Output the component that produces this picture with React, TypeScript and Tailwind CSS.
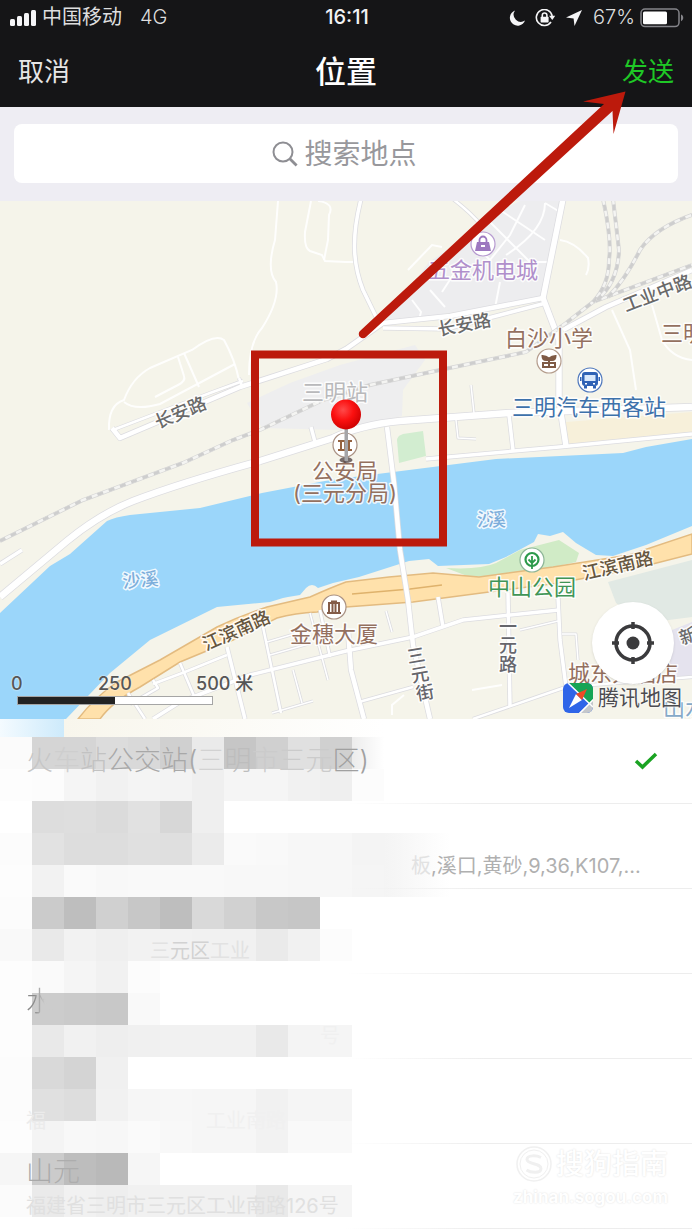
import type { ReactNode } from "react";

const cjk = "font-[Inter,'Noto_Sans_CJK_SC',sans-serif]";

function StatusBar() {
  return (
    <div className="grid h-[35px] grid-cols-[1fr_auto_1fr] items-center pr-2 pl-[10px] text-[20px] leading-[35px] text-[#dededf]">
      <div className="flex items-center">
        <svg width="27" height="17" viewBox="0 0 27 17" fill="#f5f5f7" aria-hidden="true">
          <rect x="0" y="10" width="5" height="7" rx="1.5" />
          <rect x="7" y="7" width="5" height="10" rx="1.5" />
          <rect x="14" y="4" width="5" height="13" rx="1.5" />
          <rect x="21" y="1" width="5" height="16" rx="1.5" />
        </svg>
        <span className="ml-[5px]">中国移动</span>
        <span className="ml-[18px] font-light">4G</span>
      </div>
      <span className="font-medium text-[#f2f2f4]">16:11</span>
      <div className="flex items-center justify-end">
        <svg width="74" height="18" viewBox="0 0 74 18" fill="#f5f5f7" aria-hidden="true">
          <path d="M6 1.5A7.8 7.8 0 1 0 16 11.5 7.2 7.2 0 0 1 6 1.5Z" />
          <g fill="none" stroke="#f5f5f7" strokeWidth="1.6">
            <path d="M43.2 7A8 8 0 1 0 42 13" />
            <path d="M33.3 8.2V6.3a2.3 2.3 0 0 1 4.6 0v1.9" />
          </g>
          <rect x="31.6" y="7.8" width="8" height="5.6" rx="0.6" />
          <path d="M40 6.8h6.2L43.3 11Z" />
          <path d="M73 1 57 8.600l7.600.9.9 7.500Z" />
        </svg>
        <span className="ml-[10px] font-light">67%</span>
        <svg className="ml-[5px]" width="44" height="20" viewBox="0 0 44 20" aria-hidden="true">
          <rect x="1" y="1" width="38" height="17.6" rx="4" fill="none" stroke="#85858a" strokeWidth="1.5" />
          <rect x="3" y="3.4" width="24" height="12.8" rx="1.5" fill="#fff" />
          <path d="M41 6.6c3 1 3 5.600 0 6.600Z" fill="#85858a" />
        </svg>
      </div>
    </div>
  );
}

function NavBar() {
  return (
    <nav className="grid h-[72px] grid-cols-3 items-center px-[18px] pt-[2px] text-[26px] leading-[40px]">
      <button className="justify-self-start text-[#e6e6e6]">取消</button>
      <h1 className="justify-self-center text-[31px] font-medium text-white">位置</h1>
      <button className="justify-self-end text-[#1fc826]">发送</button>
    </nav>
  );
}

function Search() {
  return (
    <div className="bg-[#eeedf3] px-[14px] pt-[17px] pb-[18px]">
      <label className="flex h-[59px] items-center justify-center rounded-lg bg-white">
        <svg width="26" height="26" viewBox="0 0 26 26" fill="none" stroke="#8e8e93" aria-hidden="true">
          <circle cx="11" cy="11" r="9.500" strokeWidth="2" />
          <path d="m17.800 17.800 6.800 6.800" strokeWidth="2.800" />
        </svg>
        <input
          type="text"
          aria-label="搜索地点"
          placeholder="搜索地点"
          className="ml-[7px] w-[116px] bg-transparent text-[28px] leading-[42px] text-neutral-800 outline-none placeholder:text-[#98989c]"
        />
      </label>
    </div>
  );
}

// [path, width] of every white street
const streets: [string, number][] = [
  ["M0 564 L22 550", 4],
  ["M453 199 Q470 212 482 226", 3],
  ["M361 199 C352 235 352 262 363 290 L380 325", 4],
  ["M113 430 L210 393 L243 381", 3],
  ["M112 428 L120 438 L153 424 L240 387 L327 359 L346 349 L383 323 L450 316 L543 298", 5],
  ["M383 328 L446 329 L500 315 L546 303", 4],
  ["M239 378 L242 386", 3],
  ["M563 199 L543 298 L559 340 L559 400 L566 446", 6],
  ["M563 330 L606 307 L692 270", 5],
  ["M426 459 L559 447 L692 434", 4],
  ["M509 415 L513 450", 4],
  ["M456 420 L458 438 L476 439", 2],
  ["M471 385 L474 413", 2],
  ["M311 427 L315 442", 4],
  ["M153 684 L185 672 L227 655", 3],
  ["M153 719 L180 702 L250 675 L346 651 L413 637 L463 620 L559 610", 4],
  ["M558 597 L560 640 L566 687", 4],
  ["M508 593 L510 707", 4],
  ["M438 597 L443 627", 4],
  ["M348 630 L351 670 L364 719", 5],
  ["M359 702 L413 687", 3],
  ["M473 719 L566 687 L692 677", 3],
  ["M227 647 L245 719", 4],
  ["M263 627 L281 713", 3],
  ["M180 663 L197 703", 3],
  ["M128 693 L145 719", 3],
  ["M153 680 L158 688 L130 704", 3],
  ["M310 613 L328 680", 2],
  ["M320 610 L330 657", 3],
  ["M293 670 L302 703", 2],
  ["M272 713 L313 701", 2],
  ["M267 642 L308 630", 2],
  ["M270 655 L312 643", 2],
  ["M386 611 L392 632", 2],
  ["M520 630 L558 621", 2],
  ["M562 634 L576 634 L578 660", 2],
  ["M0 597 L67 541 Q100 514 133 501 Q180 483 260 461 L333 438 Q360 425 400 421 L509 413 L692 407", 7],
  ["M387 427 L394 483 L400 550 L408 600 L413 645 L430 719", 5],
];

// footpaths without a casing
const paths = [
  "M278 201 L275 240 Q266 270 276 282 Q280 300 262 328 Q249 342 249 375",
  "M311 201 L305 232 Q304 248 310 251 L322 255 L325 261 L346 262",
  "M318 201 Q335 203 329 215 L328 240 L324 260",
  "M109 430 Q108 405 124 400 Q132 378 150 368 L192 350 Q215 333 224 340 Q235 360 239 380",
  "M124 402 Q135 411 160 404 L235 364",
  "M178 357 L184 376 Q186 381 178 385 L155 397",
  "M184 353 L199 387",
  "M346 262 L354 262",
  "M612 310 L630 350 L636 390",
  "M652 305 L662 340 Q672 358 692 360",
  "M560 240 Q575 242 588 258 Q590 268 586 275",
  "M430 290 L445 307 M455 272 L442 292 M412 300 L421 312 L419 320 M500 282 L495 308 M500 210 L545 240 M490 222 L530 262 M470 240 L490 260 M506 255 Q545 230 545 203 M530 262 L548 262 M545 203 L560 212 M490 260 L510 235 L525 205",
  "M408 270 L432 245 L442 247",
  "M472 690 L502 685 M392 715 L392 705 L404 695",
];

const rails = [
  "M0 541 L83 500 L183 463 L233 440 L260 430 L323 400 L370 385 L440 370 L526 352 L566 323 L593 302 L692 265",
  "M593 302 Q609 285 609 260 Q612 240 603 199",
  "M597 300 Q618 282 619 250 L613 199",
  "M608 297 Q625 280 640 250 Q655 228 692 215",
];

type LabelProps = { x: number; y: number; fill: string; size?: number; turn?: number; mid?: boolean; children: ReactNode };

function Label({ x, y, fill, size = 22, turn = 0, mid = false, children }: LabelProps) {
  return (
    <text
      x={x}
      y={y}
      fontSize={size}
      fontWeight={size < 20 ? 500 : 400}
      fill={fill}
      stroke="#fff"
      strokeOpacity="0.85"
      strokeWidth="3"
      strokeLinejoin="round"
      paintOrder="stroke"
      textAnchor={mid ? "middle" : "start"}
      transform={turn ? `rotate(${turn} ${x} ${y})` : undefined}
    >
      {children}
    </text>
  );
}

function Poi({ x, y, color, children }: { x: number; y: number; color: string; children: ReactNode }) {
  return (
    <g transform={`translate(${x} ${y})`}>
      <circle r="12" fill="#fff" stroke={color} strokeWidth="1.2" />
      {children}
    </g>
  );
}

function MapCanvas() {
  return (
    <svg
      className="block h-full w-full"
      viewBox="0 201 692 518"
      preserveAspectRatio="xMidYMid slice"
      role="img"
      aria-label="地图"
    >
      <defs>
        <radialGradient id="pin" cx="0.4" cy="0.35" r="0.7">
          <stop offset="0" stopColor="#ff4a4a" />
          <stop offset="0.5" stopColor="#fb1010" />
          <stop offset="1" stopColor="#c90000" />
        </radialGradient>
      </defs>
      <rect y="201" width="692" height="518" fill="#f5f4ea" />
      <path d="M566 446 L692 434 L692 412 L566 422Z" fill="#f7f0da" />
      <path d="M506 208 L520 201 L561 201 L543 297 L420 318 L386 320 L429 262 L470 235Z" fill="#ededef" />
      <path d="M247 403 L290 383 L340 365 L415 345 L425 360 L403 390 L402 416 L340 430 L262 428Z" fill="#eeeeef" />
      <path d="M397 440 Q397 436 403 434 L423 431 L426 456 L399 463Z" fill="#d2edd0" />
      <path
        d="M0 613 L50 566 L70 554 L107 521 Q115 517 130 515 L200 508 L262 493 L330 480 L496 459 L623 453 L646 447 L692 439 V526 L646 545 L613 556 L596 555 L576 543 L563 532 L550 536 L538 534 L534 542 L506 557 L489 564 L438 566 L429 559 L409 561 L359 577 L333 583 L318 588 Q312 582 306 588 L300 595 L288 597 L283 598 L270 602 L217 607 L150 640 L110 673 L66 719 H0Z"
        fill="#9bd6fa"
      />
      <path d="M446 568 Q480 570 496 563 L520 550 L559 540 L579 553 L576 562 L513 576 L470 577Z" fill="#d0ebc6" />
      <path d="M608 582 L692 560 V617 L646 623 L616 603Z" fill="#e1e9e4" />
      <path d="M672 630 L692 622 V677 L669 679Z" fill="#e5e3ee" />

      <path
        d="M78 719 Q95 697 117 682 L160 660 L217 627 Q240 616 267 607 L310 597 Q330 588 346 582 L389 577 L433 573 L479 577 L553 567 L629 555 L692 534 V554 L633 569 L559 583 L489 592 L413 602 L346 607 L317 612 Q295 613 277 618 L233 640 L180 662 L140 687 Q112 702 100 719Z"
        fill="#ffe1ab"
        stroke="#e3bb80"
        strokeWidth="1.500"
      />
      <path d="M352 594 L410 589 L442 585" fill="none" stroke="#dfb26c" strokeWidth="1.500" />

      <g fill="none" stroke="#fff" strokeWidth="2" strokeOpacity="0.9">
        {paths.map((d) => (
          <path key={d} d={d} />
        ))}
      </g>
      <g fill="none" stroke="#dcdce0" strokeLinejoin="round">
        {streets.map(([d, w]) => (
          <path key={d} d={d} strokeWidth={w + 1} />
        ))}
      </g>
      <g fill="none" stroke="#fff" strokeLinejoin="round">
        {streets.map(([d, w]) => (
          <path key={d} d={d} strokeWidth={w - 0.5} />
        ))}
      </g>
      <g fill="none">
        {rails.map((d) => (
          <g key={d}>
            <path d={d} stroke="#d6d6d6" strokeWidth="4" />
            <path d={d} stroke="#f4f4f2" strokeWidth="2.500" />
            <path d={d} stroke="#cecece" strokeWidth="3" strokeDasharray="6 6" />
          </g>
        ))}
      </g>

      <Label x={158} y={429} turn={-23} size={18} fill="#6a6a6a">长安路</Label>
      <Label x={439} y={336} turn={-11} size={18} fill="#6a6a6a">长安路</Label>
      <Label x={626} y={312} turn={-21} size={18} fill="#6a6a6a">工业中路</Label>
      <Label x={206} y={651} turn={-24} size={18} fill="#66563f">江滨南路</Label>
      <Label x={584} y={580} turn={-13} size={18} fill="#66563f">江滨南路</Label>
      <Label x={123} y={588} turn={-5} size={18} fill="#7daedb">沙溪</Label>
      <Label x={477} y={526} size={18} fill="#7daedb">沙</Label>
      <Label x={488} y={526} size={18} fill="#7daedb">溪</Label>
      <Label x={682} y={645} turn={-20} size={18} fill="#6a6a6a">新</Label>
      <Label x={508} y={633} size={18} mid fill="#66666c">一</Label>
      <Label x={508} y={652} size={18} mid fill="#66666c">元</Label>
      <Label x={508} y={671} size={18} mid fill="#66666c">路</Label>
      <Label x={417} y={662} turn={-10} size={18} mid fill="#66666c">三</Label>
      <Label x={421} y={681} turn={-10} size={18} mid fill="#66666c">元</Label>
      <Label x={426} y={699} turn={-10} size={18} mid fill="#66666c">街</Label>

      <Label x={483} y={278} mid fill="#b08fcb">五金机电城</Label>
      <Label x={549} y={346} mid fill="#94705f">白沙小学</Label>
      <Label x={661} y={341} fill="#94705f">三明</Label>
      <Label x={589} y={415} mid fill="#3d71ab">三明汽车西客站</Label>
      <Label x={335} y={400} mid fill="#b9b9bb">三明站</Label>
      <Label x={345} y={479} mid fill="#94705f">公安局</Label>
      <Label x={345} y={501} mid fill="#94705f">(三元分局)</Label>
      <Label x={334} y={642} mid fill="#94705f">金穗大厦</Label>
      <Label x={532} y={595} mid fill="#409556">中山公园</Label>
      <Label x={568} y={681} fill="#94705f">城东大酒店</Label>
      <Label x={663} y={716} fill="#86a9c8">山水</Label>

      <Poi x={483} y={244} color="#b79bd0">
        <path d="M-6-2H6L8 7H-8Z" fill="#9d78c0" />
        <path d="M-3.500-1V-4a3.500 3.500 0 0 1 7 0v3" fill="none" stroke="#9d78c0" strokeWidth="1.800" />
        <rect x="-2" y="1" width="4" height="2" fill="#fff" />
      </Poi>
      <Poi x={549} y={361} color="#b49c8c">
        <g fill="none" stroke="#7f5a45" strokeWidth="2">
          <path d="M-6.500-5Q-3-5 0-2.500Q3-5 6.500-5Q6.500-1 3-1H-3Q-6.500-1-6.500-5Z" fill="#7f5a45" />
          <path d="M-6 2H6V6H-6ZM0 0V6" />
        </g>
      </Poi>
      <Poi x={590} y={380} color="#4f78bd">
        <rect x="-8" y="-8" width="16" height="14" rx="3" fill="#2f62b5" />
        <rect x="-5.500" y="-5" width="11" height="6" fill="#d9e8fb" />
        <path d="M-6 6h3v2.500h-3zM3 6h3v2.500H3zM-10-3h1.500v4H-10zM8.500-3H10v4H8.500z" fill="#2f62b5" />
        <path d="M-5 3h2v1.500h-2zM3 3h2v1.500H3z" fill="#fff" />
      </Poi>
      <Poi x={345} y={445} color="#a99183">
        <path d="M-7-4H7M-7 5H7M-4-4V5M0-4V5M4-4V5" stroke="#94623f" strokeWidth="2" />
      </Poi>
      <Poi x={334} y={607} color="#a99183">
        <path d="M-7 6H7M-6-4H6M-5-4V5M-1.500-4V5M1.500-4V5M5-4V5M-3-5.500H3" stroke="#845c48" strokeWidth="2" />
      </Poi>
      <Poi x={532} y={560} color="#8cb596">
        <circle r="6.500" cy="-0.500" fill="#fff" stroke="#2c9a4b" strokeWidth="2.200" />
        <path d="M0-4V9M0 3L-3.500-.5M0 3L3.500-.5" fill="none" stroke="#2c9a4b" strokeWidth="1.800" />
      </Poi>

      <ellipse cx="346" cy="460" rx="6.500" ry="3" fill="#55484a" fillOpacity="0.8" />
      <rect x="344.500" y="428" width="3.500" height="33" fill="#a5a5a8" />
      <circle cx="346" cy="414.500" r="15" fill="url(#pin)" />
    </svg>
  );
}

function ScaleBar() {
  return (
    <div className="absolute bottom-[14px] left-[11px] w-[260px] text-[18px] leading-[20px] font-medium text-[#565656] [text-shadow:0_0_2px_#fff]">
      <div className="flex">
        <span className="w-[87px]">0</span>
        <span className="w-[98px]">250</span>
        <span>500 米</span>
      </div>
      <div className="mt-[2px] ml-[6px] flex h-[9px] w-[196px] border border-[#a5a5a5] bg-white">
        <span className="w-1/2 bg-[#222]" />
      </div>
    </div>
  );
}

function MapBrand() {
  return (
    <div className="absolute right-[10px] bottom-[5px] flex items-center gap-[5px] text-[21px] leading-[32px] text-[#4c4c50] [text-shadow:0_0_2px_#fff,0_0_2px_#fff]">
      <svg width="30" height="30" viewBox="0 0 30 30" aria-hidden="true">
        <defs>
          <clipPath id="brand">
            <rect width="30" height="30" rx="6" />
          </clipPath>
        </defs>
        <g clipPath="url(#brand)">
          <rect width="30" height="30" fill="#2f65e8" />
          <path d="M6 0H30V24Z" fill="#16a455" />
          <path d="M30 16V30H16Z" fill="#c4c7cc" />
          <path d="M16 31 31 16" stroke="#fff" strokeWidth="1.500" />
          <path d="M5 0 30 24" stroke="#fff" strokeWidth="1.500" />
        </g>
        <path d="M6 25 13 11 19 17Z" fill="#fff" />
        <path d="M24 6 13 11 19 17Z" fill="#ee4a26" />
      </svg>
      <span>腾讯地图</span>
    </div>
  );
}

function MapSection() {
  return (
    <section className="relative h-[518px] overflow-hidden">
      <MapCanvas />
      <ScaleBar />
      <MapBrand />
      <button
        aria-label="定位"
        className="absolute right-[18px] bottom-[35px] flex size-[82px] items-center justify-center rounded-full bg-white shadow-sm"
      >
        <svg width="42" height="42" viewBox="0 0 42 42" fill="none" stroke="#3b3b3d" aria-hidden="true">
          <circle cx="21" cy="21" r="17" strokeWidth="3.500" />
          <circle cx="21" cy="21" r="6.500" fill="#3b3b3d" stroke="none" />
          <path d="M21 0v7M21 35v7M0 21h7M35 21h7" strokeWidth="3.500" />
        </svg>
      </button>
    </section>
  );
}

// grey levels of the 32px tiles, one string of hex pairs per row, ".." is empty
const tiles = [
  "fb d5 d5 dc d9 d0 ea c6 d0 e0 d0 ec",
  "fd fc f5 f1 f4 f3 ef f5 f5 f1 ef fc",
  ".. dd de db e1 d7 ef",
  "fc e2 dd dd e0 df eb fa f9 f7 f7 f4",
  "fd f2 fa f8 f9 f9 f9 f8 f8 f7 f7 f5",
  "fc cb be d0 c7 be d9 d1 c8 c6",
  "f9 e9 f2 ef f2 f2 f1 f1 ea f1 fc",
  "fd fa f5 f1 fc",
  "fd cc ca c8 f9",
  "fd e9 f1 ee f0 f1 f1 f1 e9 f4 f5",
  "fc d9 d4 f0",
  "fc e0 dd f1 f6 f7 f6 f6 f1 f5 f5",
  "fd f4 f8 f7 fa f8 f6 f6 f2 f9 f9",
  "f6 cb bd b9 f6",
  "fb ea f1 ee f1 f1 f1 f1 e9 f5 f5",
];

function Mosaic() {
  return (
    <svg className="absolute top-0 left-0" width="480" height="511" viewBox="0 0 480 511" aria-hidden="true">
      <defs>
        <linearGradient id="edge">
          <stop offset="0" stopColor="#f4f4f4" />
          <stop offset="1" stopColor="#f4f4f4" stopOpacity="0" />
        </linearGradient>
        <linearGradient id="fade">
          <stop offset="0" stopColor="#fff" stopOpacity="0" />
          <stop offset="1" stopColor="#fff" />
        </linearGradient>
        <linearGradient id="shore">
          <stop offset="0" stopColor="#f4fbff" />
          <stop offset="1" stopColor="#cdeafb" />
        </linearGradient>
        <linearGradient id="sand">
          <stop offset="0" stopColor="#f8f6ec" />
          <stop offset="1" stopColor="#fff" />
        </linearGradient>
      </defs>
      <rect width="64" height="18" fill="url(#shore)" />
      <rect x="64" width="320" height="18" fill="url(#sand)" />
      {tiles.map((row, r) =>
        row.split(" ").map((v, c) =>
          v === ".." ? null : (
            <rect key={`${r}-${c}`} x={c * 32} y={18 + r * 32} width="32" height="32" fill={`#${v}${v}${v}`} shapeRendering="crispEdges" />
          ),
        ),
      )}
      <rect x="352" y="18" width="32" height="32" fill="url(#fade)" />
      <rect x="384" y="114" width="66" height="64" fill="url(#edge)" />
    </svg>
  );
}

function Row({ title, detail, checked = false }: { title?: ReactNode; detail?: ReactNode; checked?: boolean }) {
  return (
    <li>
      <button className="flex h-[84px] w-full items-center pr-[34px] pl-[26px] text-left">
        <span className={detail ? "min-w-0 flex-1 pt-[6px]" : "min-w-0 flex-1"}>
          {title && <span className="block h-[34px] text-[27px] leading-[34px] font-light whitespace-nowrap">{title}</span>}
          {detail && <span className="block h-[34px] text-[20px] leading-[34px] whitespace-nowrap">{detail}</span>}
        </span>
        {checked && (
          <svg width="24" height="18" viewBox="0 0 24 18" fill="none" stroke="#1aa322" strokeWidth="3.500" aria-label="已选">
            <path d="m2 9 6.500 6L22 2" />
          </svg>
        )}
      </button>
      <div className="ml-auto h-px w-1/2 bg-linear-to-r from-transparent to-[#ededed] to-40%" />
    </li>
  );
}

function Places() {
  return (
    <section className="relative bg-white">
      <Mosaic />
      <ul className="relative">
        <Row
          checked
          title={
            <>
              <span className="text-[#c6c6c6]">火</span>
              <span className="text-[#cecece]">车</span>
              <span className="text-[#c2c2c2]">站</span>
              <span className="text-[#a8a8a8]">公交站(</span>
              <span className="text-[#d2d2d2]">三</span>
              <span className="text-[#bdbdbd]">明</span>
              <span className="text-[#cbcbcb]">市三元</span>
              <span className="text-[#a0a0a0]">区)</span>
            </>
          }
        />
        <Row
          title={<span />}
          detail={
            <span className="ml-[385px] text-[#b0b0b0]">
              <span className="text-[#e2e2e2]">板</span>,溪口,黄砂,9,36,K107,...
            </span>
          }
        />
        <Row
          title={<span />}
          detail={
            <span className="ml-[124px] text-[#e2e2e2]">
              三<span className="text-[#d2d2d2]">元区</span>工业
            </span>
          }
        />
        <Row
          title={<span className="bg-linear-to-r from-[#8a8a8a] from-30% to-[#cccccc] to-70% bg-clip-text text-transparent">水</span>}
          detail={<span className="ml-[294px] text-[#f0f0f0]">号</span>}
        />
        <Row
          title={<span />}
          detail={
            <>
              <span className="text-[#ebebeb]">福</span>
              <span className="ml-[160px] text-[#f0f0f0]">工业南路</span>
            </>
          }
        />
        <Row
          title={
            <>
              <span className="text-[#a9a9a9]">山</span>
              <span className="text-[#adadad]">元</span>
            </>
          }
          detail={<span className="text-[#e0e0e0]">福建省三明市三元区工业南路126号</span>}
        />
      </ul>
      <div className="pointer-events-none absolute right-[24px] bottom-[18px] text-right text-white [text-shadow:0_0_2px_#dcdcdc]">
        <div className="flex items-center justify-end gap-[3px] text-[28px] leading-[36px] font-medium">
          <svg width="38" height="38" viewBox="0 0 38 38" fill="none" stroke="#f0f0f0" aria-hidden="true">
            <circle cx="19" cy="19" r="17" strokeWidth="1.500" />
            <circle cx="19" cy="19" r="14" strokeWidth="1" />
            <path d="M26 12.500C22 10.500 12 9.500 12 14.500S26 18 26 23.500 15 27.500 11.500 25" strokeWidth="3" />
          </svg>
          <span>搜狗指南</span>
        </div>
        <div className="text-[17px] leading-[28px] font-bold">zhinan.sogou.com</div>
      </div>
    </section>
  );
}

// red frame and arrow drawn over the page
function Annotation() {
  return (
    <svg className="pointer-events-none absolute top-0 left-0" width="692" height="560" viewBox="0 0 692 560" aria-hidden="true">
      <rect x="255" y="354.500" width="188" height="188" fill="none" stroke="#bc1a0c" strokeWidth="8" />
      <path d="M360 331 604 104 583 101.500 625.500 91.500 613.500 134 612.500 111 366 337A4.200 4.200 0 0 1 360 331Z" fill="#bc1a0c" />
    </svg>
  );
}

export default function App() {
  return (
    <div className={`relative min-h-screen overflow-hidden bg-white ${cjk}`}>
      <header className="bg-[#151517]">
        <StatusBar />
        <NavBar />
      </header>
      <Search />
      <MapSection />
      <Places />
      <Annotation />
    </div>
  );
}
